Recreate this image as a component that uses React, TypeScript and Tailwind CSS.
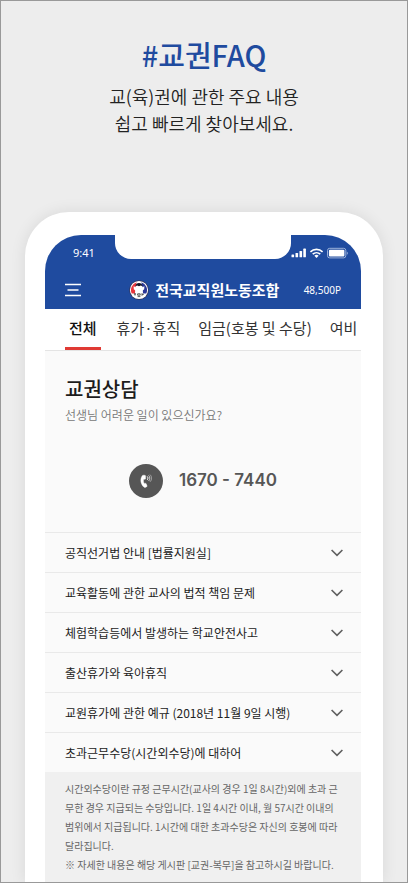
// FaqPage

import { useState } from "react";

const tabs = ["전체", "휴가·휴직", "임금(호봉 및 수당)", "여비"];

const faqs = [
  { title: "공직선거법 안내 [법률지원실]" },
  { title: "교육활동에 관한 교사의 법적 책임 문제" },
  { title: "체험학습등에서 발생하는 학교안전사고" },
  { title: "출산휴가와 육아휴직" },
  { title: "교원휴가에 관한 예규 (2018년 11월 9일 시행)" },
  {
    title: "초과근무수당(시간외수당)에 대하어",
    answer: [
      "시간외수당이란 규정 근무시간(교사의 경우 1일 8시간)외에 초과 근",
      "무한 경우 지급되는 수당입니다. 1일 4시간 이내, 월 57시간 이내의",
      "범위에서 지급됩니다. 1시간에 대한 초과수당은 자신의 호봉에 따라",
      "달라집니다.",
      "※ 자세한 내용은 해당 게시판 [교권-복무]을 참고하시길 바랍니다.",
    ],
  },
];

const StatusIcons = () => (
  <svg width="58" height="12" viewBox="0 0 58 12" fill="none" aria-hidden="true">
    <g fill="#fff">
      <rect x="0.5" y="7.5" width="2.6" height="2.8" rx="0.6" />
      <rect x="4.5" y="6" width="2.6" height="4.3" rx="0.6" />
      <rect x="8.5" y="4" width="2.6" height="6.3" rx="0.6" />
      <rect x="12.3" y="1.6" width="2.6" height="8.7" rx="0.6" />
    </g>
    <g stroke="#fff" strokeWidth="1.6">
      <path d="M19.4 4.8a8.8 8.8 0 0 1 12.2 0" />
      <path d="M21.7 7.2a5.5 5.5 0 0 1 7.6 0" />
    </g>
    <path d="M25.5 11l-2.1-2.3a3.1 3.1 0 0 1 4.2 0z" fill="#fff" />
    <rect x="36.5" y="1.3" width="18.3" height="9.6" rx="2.2" stroke="#a9bcdf" strokeWidth="0.9" />
    <rect x="37.9" y="2.7" width="15.5" height="6.8" rx="1.1" fill="#fff" />
    <path d="M55.8 4.4c1.3.5 1.3 2.9 0 3.4z" fill="#a9bcdf" />
  </svg>
);

const MenuIcon = () => (
  <svg width="16" height="14" viewBox="0 0 16 14" stroke="#fff" strokeWidth="1.5" aria-hidden="true">
    <path d="M0 1.5h16M2.5 7h11M0 12.5h16" />
  </svg>
);

const Emblem = () => (
  <svg width="20" height="20" viewBox="0 0 20 20" aria-hidden="true">
    <circle cx="10" cy="10" r="9.8" fill="#33335a" />
    <circle cx="10" cy="10" r="9.1" fill="#fff" />
    <path d="M7.6 2.2a8.2 8.2 0 0 0-4.9 11.2l3.2 0.2z" fill="#e8343c" />
    <path d="M12.4 2.2a8.2 8.2 0 0 1 4.9 11.2l-3.2 0.2z" fill="#2c3796" />
    <path d="M4.6 6.2l2.4 1.2h6l2.4-1.2-.2 3-1.8 1.6.2 2.4H6.4l.2-2.4-1.8-1.6z" fill="#fff" />
    <circle cx="10" cy="8.2" r="3.8" fill="#fff" />
    <path d="M6.4 6.4c.4-4.4 6.8-4.4 7.2 0l-1.7-1-1.9.8-1.9-.8z" fill="#17172a" />
    <path
      d="M4.8 14h2.2M6 13.2v2.4M8.6 13.8h2.6v1.4H8.6zM8.6 16.6h2.8M13 13.2v2.6M13 14.4h1.8"
      stroke="#333"
      strokeWidth="0.8"
      fill="none"
    />
  </svg>
);

const CallIcon = () => (
  <svg width="34" height="34" viewBox="0 0 34 34" fill="none" aria-hidden="true">
    <circle cx="17" cy="17" r="17" fill="#565656" />
    <path
      d="M14.3 11.2l1.5.1c.6.1.8.5.8 1v2.1c0 .5-.3.9-.8.9h-1.1c-.4 1.1-.3 2.6.4 4.1l1-.2c.5-.1.9.1 1.1.6l.8 1.9c.2.5 0 .9-.4 1.1l-1.3.6c-.5.2-1 .1-1.4-.3-3.4-3.2-4-8-1.6-11.4.3-.4.6-.5 1-.5z"
      fill="#fff"
      stroke="#fff"
      strokeWidth="0.4"
    />
    <path d="M18.2 12.4c1 .8 1 2.6 0 3.5" stroke="#fff" strokeWidth="1" />
    <path d="M19.6 11.4c1.6 1.4 1.6 4.1 0 5.6" stroke="#ddd" strokeWidth="0.9" />
    <path d="M21 10.6c2 2 2 5.3 0 7.2" stroke="#bbb" strokeWidth="0.8" />
  </svg>
);

const ChevronIcon = () => (
  <svg width="12" height="8" viewBox="0 0 12 8" fill="none" stroke="#5f5f5f" strokeWidth="1.6" aria-hidden="true">
    <path d="M0.6 1l5.4 5.4L11.4 1" />
  </svg>
);

const App = () => {
  const [activeTab, setActiveTab] = useState(0);
  const [openIndex, setOpenIndex] = useState(5);

  return (
    <div className="flex min-h-screen flex-col overflow-hidden border border-[#999] bg-[#ededed] font-['Noto_Sans_CJK_KR',sans-serif] text-[#222]">
      <header className="flex h-[211px] flex-col items-center pt-[31px] text-center">
        <h1 className="text-[29px] leading-11 font-medium text-[#1f4b9f]">#교권FAQ</h1>
        <p className="mt-[7px] text-lg leading-[27px] font-[350]">
          교(육)권에 관한 주요 내용
          <br />
          쉽고 빠르게 찾아보세요.
        </p>
      </header>

      <div className="mx-6 -mb-px flex flex-1 flex-col rounded-t-[44px] bg-white pt-[23px] pr-[22px] pl-5 shadow-[0_0_16px_rgba(0,0,0,0.09)]">
        <main className="flex flex-1 flex-col overflow-hidden rounded-t-[36px] bg-[#fafafa]">
          <div className="relative bg-[#1f4b9f] text-white">
            <div className="absolute top-0 left-1/2 h-6 w-44 -translate-x-1/2 rounded-b-2xl bg-white" />
            <div className="flex h-9 items-center justify-between pr-3 pl-7">
              <span className="font-['Noto_Sans',sans-serif] text-[11px]">9:41</span>
              <StatusIcons />
            </div>
            <div className="flex h-[38px] items-center justify-between px-5">
              <button type="button" aria-label="메뉴">
                <MenuIcon />
              </button>
              <a href="#" className="ml-6 flex items-center gap-1.5 text-[15px] leading-5 font-bold">
                <Emblem />
                전국교직원노동조합
              </a>
              <span className="font-['Noto_Sans',sans-serif] text-[10px]">48,500P</span>
            </div>
          </div>

          <nav className="flex h-[42px] gap-[18px] overflow-hidden border-b border-[#e4e4e4] bg-white pl-5 text-[15px]">
            {tabs.map((item, index) => (
              <button
                key={item}
                type="button"
                onClick={() => setActiveTab(index)}
                className={
                  activeTab === index
                    ? "-mr-0.5 shrink-0 border-b-3 border-[#e03a34] px-1 font-medium text-[#111]"
                    : "shrink-0 border-b-3 border-transparent text-[#333]"
                }
              >
                {item}
              </button>
            ))}
          </nav>

          <section className="h-[181px] px-5 pt-6">
            <h2 className="text-xl leading-7 font-medium text-[#1c1c1c]">교권상담</h2>
            <p className="text-xs leading-6 font-[350] text-[#777]">선생님 어려운 일이 있으신가요?</p>
            <div className="mt-[37px] flex items-center justify-center gap-4">
              <CallIcon />
              <a href="tel:1670-7440" className="font-['Inter',sans-serif] text-[17px] font-semibold text-[#565656]">
                1670 - 7440
              </a>
            </div>
          </section>

          {faqs.map((item, index) => (
            <div key={item.title} className="border-t border-[#e9e9e9]">
              <button
                type="button"
                aria-expanded={openIndex === index}
                onClick={() => setOpenIndex(openIndex === index ? -1 : index)}
                className="flex h-[39px] w-full items-center justify-between pr-[18px] pl-5 text-left text-xs whitespace-nowrap"
              >
                {item.title}
                <ChevronIcon />
              </button>
              {openIndex === index && item.answer && (
                <p className="bg-[#f0f0f0] px-5 pt-[7px] text-[10px] leading-[19px] whitespace-nowrap text-[#666]">
                  {item.answer.map((line) => (
                    <span key={line} className="block">
                      {line}
                    </span>
                  ))}
                </p>
              )}
            </div>
          ))}
          <div className="flex-1 bg-[#f0f0f0]" />
        </main>
      </div>
    </div>
  );
};

export default App;
